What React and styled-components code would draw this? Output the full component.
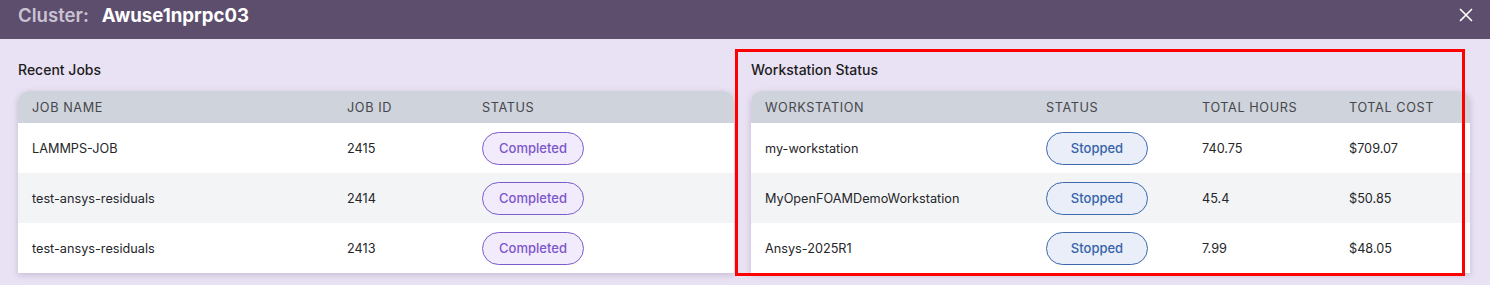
import React from "react";
import styled, { createGlobalStyle } from "styled-components";

const Global = createGlobalStyle`
  html, body { margin: 0; padding: 0; background: #e9e1f4; }
  body { font-family: Inter, "Noto Sans", "Liberation Sans", sans-serif; }
  * { box-sizing: border-box; }
`;

const Page = styled.div`
  position: relative;
  width: 1490px;
  height: 285px;
  overflow: hidden;
  background: #e9e1f4;
`;

const TopBar = styled.div`
  height: 39px;
  background: #5d4e6e;
  display: flex;
  align-items: flex-start;
  justify-content: space-between;
  padding: 3px 17px 0 18px;
`;

const Title = styled.div`
  display: flex;
  gap: 13px;
  font-size: 18.6px;
  font-weight: 700;
  line-height: 24px;
`;

const TitleLabel = styled.span`
  color: #c9c3d3;
  font-weight: 600;
`;

const TitleValue = styled.span`
  color: #ffffff;
`;

const CloseButton = styled.button`
  border: 0;
  background: transparent;
  padding: 0;
  margin-top: 5px;
  width: 14px;
  height: 14px;
  display: flex;
  cursor: pointer;
`;

const Content = styled.div`
  display: grid;
  grid-template-columns: 716px 719px;
  column-gap: 17px;
  padding: 0 20px 0 18px;
`;

const Section = styled.section`
  display: flex;
  flex-direction: column;
`;

const SectionTitle = styled.h3`
  margin: 0;
  padding: 22px 0 0 0;
  height: 52px;
  font-size: 14px;
  font-weight: 500;
  color: #1c1c1c;
  line-height: 17px;
`;

const Table = styled.div`
  background: #fff;
  border-radius: 10px 10px 0 0;
  overflow: hidden;
  box-shadow: 0 2px 6px rgba(70, 60, 90, 0.22);
`;

const Row = styled.div`
  display: grid;
  grid-template-columns: ${(p) => p.$cols};
  align-items: center;
  height: ${(p) => (p.$head ? 32 : 50)}px;
  background: ${(p) => (p.$head ? "#cfd3db" : p.$alt ? "#f3f4f6" : "#ffffff")};
`;

const HeadCell = styled.div`
  padding-left: 14px;
  font-size: 12.7px;
  letter-spacing: 0.6px;
  color: #45474c;
  text-transform: uppercase;
`;

const Cell = styled.div`
  padding-left: 14px;
  font-size: 12.7px;
  color: #25262a;
  white-space: nowrap;
`;

const Badge = styled.span`
  display: inline-flex;
  align-items: center;
  justify-content: center;
  width: 102px;
  height: 33px;
  border-radius: 17px;
  font-size: 13px;
  font-weight: 500;
  border: 1px solid ${(p) => (p.$tone === "blue" ? "#3c68ad" : "#7c5ccc")};
  background: ${(p) => (p.$tone === "blue" ? "#e9eef8" : "#f1ebfb")};
  color: ${(p) => (p.$tone === "blue" ? "#3763a8" : "#7d55cb")};
`;

const Highlight = styled.div`
  position: absolute;
  left: 735px;
  top: 49px;
  width: 730px;
  height: 227px;
  border: 3px solid #ff0000;
  pointer-events: none;
`;

const jobs = [
  { name: "LAMMPS-JOB", id: "2415" },
  { name: "test-ansys-residuals", id: "2414" },
  { name: "test-ansys-residuals", id: "2413" },
];

const stations = [
  { name: "my-workstation", hours: "740.75", cost: "$709.07" },
  { name: "MyOpenFOAMDemoWorkstation", hours: "45.4", cost: "$50.85" },
  { name: "Ansys-2025R1", hours: "7.99", cost: "$48.05" },
];

const jobCols = "315px 135px 1fr";
const wsCols = "281px 156px 147px 1fr";

export default function App() {
  return (
    <Page>
      <Global />
      <TopBar>
        <Title>
          <TitleLabel>Cluster:</TitleLabel>
          <TitleValue>Awuse1nprpc03</TitleValue>
        </Title>
        <CloseButton aria-label="Close">
          <svg width="14" height="14" viewBox="0 0 14 14">
            <path d="M1.5 1.5 L12.5 12.5 M12.5 1.5 L1.5 12.5" stroke="#ffffff" strokeWidth="1.7" strokeLinecap="round" />
          </svg>
        </CloseButton>
      </TopBar>
      <Content>
        <Section>
          <SectionTitle>Recent Jobs</SectionTitle>
          <Table>
            <Row $head $cols={jobCols}>
              <HeadCell>Job Name</HeadCell>
              <HeadCell>Job ID</HeadCell>
              <HeadCell>Status</HeadCell>
            </Row>
            {jobs.map((j, i) => (
              <Row key={i} $cols={jobCols} $alt={i % 2 === 1}>
                <Cell>{j.name}</Cell>
                <Cell>{j.id}</Cell>
                <Cell>
                  <Badge>Completed</Badge>
                </Cell>
              </Row>
            ))}
          </Table>
        </Section>
        <Section>
          <SectionTitle>Workstation Status</SectionTitle>
          <Table>
            <Row $head $cols={wsCols}>
              <HeadCell>Workstation</HeadCell>
              <HeadCell>Status</HeadCell>
              <HeadCell>Total Hours</HeadCell>
              <HeadCell>Total Cost</HeadCell>
            </Row>
            {stations.map((s, i) => (
              <Row key={i} $cols={wsCols} $alt={i % 2 === 1}>
                <Cell>{s.name}</Cell>
                <Cell>
                  <Badge $tone="blue">Stopped</Badge>
                </Cell>
                <Cell>{s.hours}</Cell>
                <Cell>{s.cost}</Cell>
              </Row>
            ))}
          </Table>
        </Section>
      </Content>
      <Highlight />
    </Page>
  );
}
